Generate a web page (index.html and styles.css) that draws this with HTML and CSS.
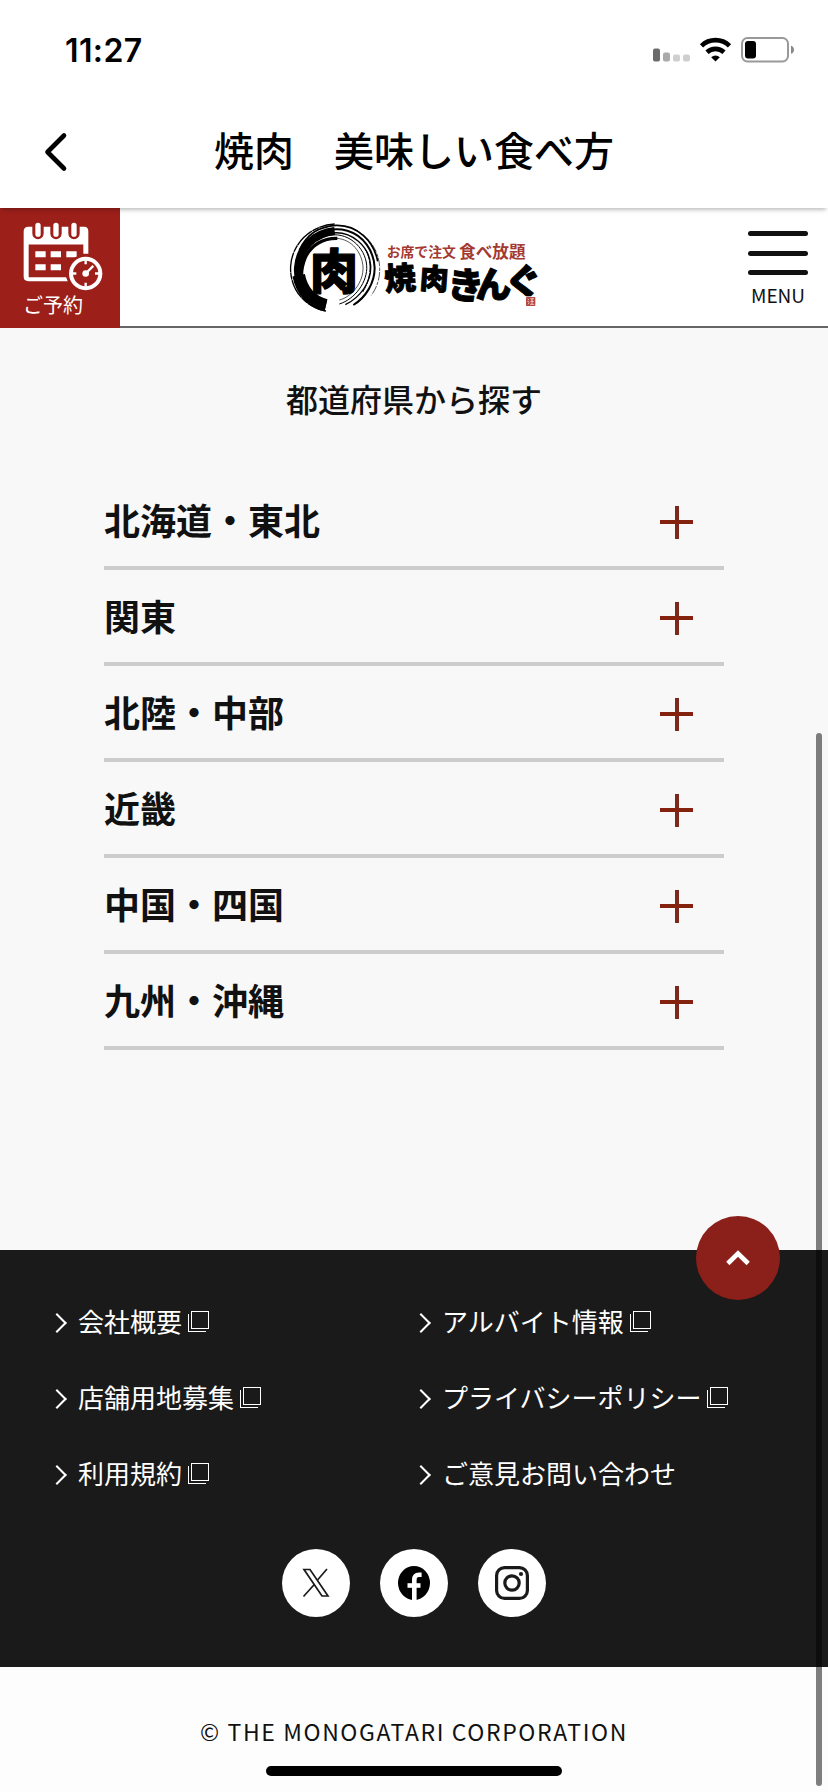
FILE: index.html
```html
<!DOCTYPE html>
<html lang="ja">
<head>
<meta charset="utf-8">
<title>焼肉　美味しい食べ方</title>
<link rel="stylesheet" href="styles.css">
</head>
<body>

<!-- ステータスバー -->
<div class="status-bar">
  <span class="time">11:27</span>
  <svg class="status-icons" width="142" height="26" viewBox="0 0 142 26">
    <rect x="0" y="11.500" width="7" height="13" rx="2" fill="#6a6a6a"/>
    <rect x="10" y="15.500" width="7" height="9" rx="2" fill="#aaa"/>
    <rect x="20" y="17.500" width="7" height="7" rx="2" fill="#cfcfcf"/>
    <rect x="30" y="17.500" width="7" height="7" rx="2" fill="#cfcfcf"/>
    <g fill="none" stroke="#000" stroke-width="4.600">
      <path d="M48.500 8.800a20 20 0 0 1 28 0"/>
      <path d="M54 15.200a12.500 12.500 0 0 1 17 0"/>
    </g>
    <path d="M58.200 20.300a6.200 6.200 0 0 1 8.600 0L62.500 24.600z"/>
    <rect x="89" y="1" width="46" height="23.500" rx="5.500" fill="none" stroke="#999" stroke-width="2"/>
    <rect x="92" y="4" width="11" height="17.500" rx="3"/>
    <path d="M138 8.800c4 1 4 7 0 8z" fill="#888"/>
  </svg>
</div>

<!-- タイトル -->
<div class="title-bar">
  <svg class="back" width="24" height="40" viewBox="0 0 24 40"><path d="M20 3.500L3.500 20L20 36.500" fill="none" stroke="#000" stroke-width="4.600" stroke-linecap="round" stroke-linejoin="round"/></svg>
  <h1>焼肉　美味しい食べ方</h1>
</div>

<!-- サイトヘッダー -->
<header class="site-header">
  <a class="reserve">
    <svg width="80" height="69" viewBox="70 66 240 206">
      <path d="M86 80H254Q266 80 266 94V161H251V133H87V231H199L205 243H86Q72 243 72 229V94Q72 80 86 80z" fill="#fff"/>
      <g stroke-linecap="round" fill="none">
        <path d="M115 80V100M169 80V100M223 80V100" stroke="#9d1f1a" stroke-width="34"/>
        <path d="M115 76V102M169 76V102M223 76V102" stroke="#fff" stroke-width="16"/>
      </g>
      <path d="M107 153h31v18h-31zM153 153h31v18h-31zM200 153h31v18h-31zM107 192h31v18h-31zM153 192h31v18h-31z" fill="#fff"/>
      <circle cx="258" cy="220" r="58" fill="#9d1f1a"/>
      <circle cx="258" cy="220" r="44" fill="none" stroke="#fff" stroke-width="12"/>
      <path d="M258 180v12M258 248v12M218 220h12M286 220h12" stroke="#fff" stroke-width="7"/>
      <circle cx="258" cy="220" r="10" fill="#fff"/>
      <path d="M258 220l23-23" stroke="#fff" stroke-width="7"/>
    </svg>
    <span>ご予約</span>
  </a>
  <svg class="logo" width="254" height="97" viewBox="36 60 762 291">
    <!-- 筆の輪 -->
    <g fill="none" stroke="#000">
      <path d="M150 314C100 302 62 260 66 203C70 145 112 100 176 93" stroke-width="24"/>
      <path d="M150 316C108 306 78 276 68 226" stroke-width="38"/>
      <path d="M150 333C84 321 40 265 44 198C48 130 105 76 176 72" stroke-width="4" stroke-dasharray="60 2 22 1"/>
      <path d="M96 282C74 256 70 215 88 172C106 134 142 114 184 115" stroke-width="10"/>
      <path d="M70 150C94 101 128 80 180 76C244 74 294 124 305 184" stroke-width="5"/>
      <path d="M100 118C132 90 176 82 214 92C262 106 294 152 296 204C296 248 270 292 232 315" stroke-width="6"/>
      <path d="M168 99C228 92 280 140 284 196C287 244 254 292 208 314" stroke-width="4"/>
      <path d="M150 108C214 90 268 142 272 196C276 246 236 298 190 312" stroke-width="3"/>
      <path d="M182 115C228 118 258 158 261 200C264 246 226 292 190 300" stroke-width="2"/>
      <path d="M222 82C278 104 310 152 311 204C312 236 302 264 286 286" stroke-width="2" stroke-dasharray="26 4 10 3"/>
      <path d="M268 148C290 186 286 236 260 276" stroke-width="3" stroke-dasharray="34 3"/>
    </g>
    <text class="brush" x="102" y="266" font-size="144" stroke-width="4">肉</text>
    <text class="tagline" x="332" y="172" font-size="41.500">お席で注文</text>
    <text class="tagline" x="549" y="173" font-size="50">食べ放題</text>
    <text class="brush" stroke-width="3"><tspan x="328" y="272" font-size="94" rotate="-4">焼</tspan><tspan x="430" y="265" font-size="86" rotate="4">肉</tspan><tspan x="510" y="290" font-size="110" rotate="6">き</tspan><tspan x="598" y="294" font-size="108">ん</tspan><tspan x="690" y="288" font-size="110" rotate="-3">ぐ</tspan></text>
    <rect x="748" y="289" width="32" height="31" fill="#fff"/>
    <rect x="750" y="291" width="28" height="27" rx="2" fill="#b4483f"/>
    <path d="M755 297l4 3M754 304l5 2M756 313l4-5M763 296h11M768 296v17M763 304h11M762 313h13" stroke="#fff" stroke-width="2"/>
  </svg>
  <a class="menu">
    <i></i><i></i><i></i>
    <span>MENU</span>
  </a>
</header>

<!-- 都道府県 -->
<main class="search-area">
  <h2>都道府県から探す</h2>
  <ul class="area-list">
    <li>北海道・東北<i class="plus"></i></li>
    <li>関東<i class="plus"></i></li>
    <li>北陸・中部<i class="plus"></i></li>
    <li>近畿<i class="plus"></i></li>
    <li>中国・四国<i class="plus"></i></li>
    <li>九州・沖縄<i class="plus"></i></li>
  </ul>
</main>

<!-- フッター -->
<footer class="site-footer">
  <a class="to-top">
    <svg width="24" height="16" viewBox="0 0 24 16"><path d="M1.800 13.500L12 3.500L22.200 13.500" fill="none" stroke="#fff" stroke-width="4.600"/></svg>
  </a>
  <ul class="footer-links">
    <li class="blank">会社概要</li>
    <li class="blank">アルバイト情報</li>
    <li class="blank">店舗用地募集</li>
    <li class="blank">プライバシーポリシー</li>
    <li class="blank">利用規約</li>
    <li>ご意見お問い合わせ</li>
  </ul>
  <div class="sns">
    <a>
      <svg width="28" height="30" viewBox="0 0 28 30" fill="none" stroke="#1a1a1a" stroke-width="1.700"><path d="M2 1.500H8L26 28H20z"/><path d="M25 1L15.300 12.200M12.300 16.500L1.500 28.500"/></svg>
    </a>
    <a>
      <svg width="32" height="34" viewBox="0 0 32 34"><ellipse cx="16" cy="17" rx="16" ry="17" fill="#000"/><path d="M16.300 34V14Q16.300 8.800 21 8.800H23.600" fill="none" stroke="#fff" stroke-width="4.600"/><path d="M9.500 19.500H22.500" stroke="#fff" stroke-width="4.600"/></svg>
    </a>
    <a>
      <svg width="34" height="34" viewBox="0 0 34 34"><rect x="1.600" y="1.600" width="30.800" height="30.800" rx="8" fill="none" stroke="#1a1a1a" stroke-width="3.200"/><circle cx="17" cy="17" r="7.200" fill="none" stroke="#1a1a1a" stroke-width="3.200"/><circle cx="26" cy="8" r="2.100" fill="#1a1a1a"/></svg>
    </a>
  </div>
</footer>
<p class="copyright">© THE MONOGATARI CORPORATION</p>

<div class="scrollbar"></div>
<div class="home-indicator"></div>

</body>
</html>
```
FILE: styles.css
```css
*, *::before, *::after {
  box-sizing: border-box;
}
body {
  margin: 0;
  position: relative;
  width: 828px;
  height: 1792px;
  overflow: hidden;
  background: #fdfdfd;
  color: #111;
  font-family: "Noto Sans CJK JP", sans-serif;
}
h1, h2, p, ul {
  margin: 0;
  padding: 0;
}
ul {
  list-style: none;
}

/* ステータスバー */
.status-bar {
  display: flex;
  justify-content: space-between;
  align-items: center;
  height: 100px;
  padding: 0 33px 0 65px;
  background: #fff;
}
.time {
  font-family: Inter, sans-serif;
  font-size: 32px;
  font-weight: 600;
  letter-spacing: 0.4px;
  color: #000;
}

/* タイトル */
.title-bar {
  display: flex;
  align-items: center;
  height: 108px;
  padding: 0 44px 4px;
  background: #fff;
  position: relative;
  z-index: 1;
  box-shadow: 0 4px 4px -2px rgba(0, 0, 0, 0.25);
}
.title-bar h1 {
  flex: 1;
  margin-right: 24px;
  padding-bottom: 6px;
  text-align: center;
  font-size: 40px;
  line-height: 60px;
  font-weight: 500;
  color: #000;
}

/* サイトヘッダー */
.site-header {
  display: flex;
  justify-content: space-between;
  height: 120px;
  background: linear-gradient(#666, #666) bottom / 100% 2px no-repeat #fff;
}
.reserve {
  width: 120px;
  padding: 14px 0 0 23px;
  background: #9d1f1a;
  color: #fff;
}
.reserve svg {
  display: block;
}
.reserve span {
  display: block;
  font-size: 20px;
  line-height: 28px;
}
.logo {
  margin: 12px 38px 0 0;
}
.brush {
  font-weight: 900;
  fill: #000;
  stroke: #000;
  stroke-linejoin: round;
}
.tagline {
  font-weight: 700;
  fill: #a33a32;
}
.menu {
  display: flex;
  flex-direction: column;
  align-items: center;
  width: 60px;
  margin: 23px 20px 0 0;
}
.menu i {
  width: 60px;
  height: 5px;
  margin-bottom: 14.5px;
  border-radius: 3px;
  background: #111;
}
.menu span {
  margin-top: -9px;
  font-size: 19px;
  line-height: 28px;
}

/* 都道府県から探す */
.search-area {
  height: 922px;
  padding: 46px 104px 0;
  background: #f8f8f8;
}
.search-area h2 {
  text-align: center;
  font-size: 32px;
  line-height: 48px;
  font-weight: 500;
}
.area-list {
  margin-top: 52px;
}
.area-list li {
  display: flex;
  justify-content: space-between;
  align-items: center;
  height: 96px;
  padding: 0 31px 2px 0;
  border-bottom: 4px solid #ccc;
  font-size: 36px;
  font-weight: 700;
}
.plus {
  width: 33px;
  height: 33px;
  margin-top: 7px;
  background:
    linear-gradient(#84210f, #84210f) 0 14px / 33px 4px no-repeat,
    linear-gradient(#7d281c, #7d281c) 15px 0 / 4px 33px no-repeat;
}

/* フッター */
.site-footer {
  position: relative;
  height: 417px;
  padding: 35px 50px 0;
  background: #1a1a1a;
  color: #fff;
}
.to-top {
  position: absolute;
  top: -34px;
  right: 48px;
  display: flex;
  align-items: center;
  justify-content: center;
  width: 84px;
  height: 84px;
  border-radius: 50%;
  background: #8b1f1a;
}
.footer-links {
  display: grid;
  grid-template-columns: 364px 1fr;
}
.footer-links li {
  display: flex;
  align-items: center;
  height: 76px;
  padding-bottom: 5px;
  font-size: 26px;
  font-weight: 400;
}
.footer-links li::before {
  content: "";
  width: 14px;
  height: 14px;
  margin: 5px 14px 0 0;
  border-top: 2px solid #fff;
  border-right: 2px solid #fff;
  transform: rotate(45deg);
}
/* 別ウィンドウアイコン */
.footer-links .blank::after {
  content: "";
  width: 18px;
  height: 18px;
  margin: 0 0 1px 9px;
  border: 1px solid #fff;
  box-shadow: -2px 2px 0 #1a1a1a, -3px 3px 0 #fff;
}
.sns {
  display: flex;
  justify-content: center;
  gap: 30px;
  margin-top: 36px;
}
.sns a {
  display: flex;
  align-items: center;
  justify-content: center;
  width: 68px;
  height: 68px;
  border-radius: 50%;
  background: #fff;
}
.copyright {
  padding-top: 46px;
  text-align: center;
  font-size: 23px;
  line-height: 36px;
  letter-spacing: 1.6px;
}

.scrollbar {
  position: absolute;
  top: 733px;
  left: 816px;
  width: 6px;
  height: 1053px;
  border-radius: 3px;
  background: rgba(0, 0, 0, 0.5);
}
.home-indicator {
  position: absolute;
  left: 266px;
  bottom: 16px;
  width: 296px;
  height: 10px;
  border-radius: 5px;
  background: #000;
}
```
